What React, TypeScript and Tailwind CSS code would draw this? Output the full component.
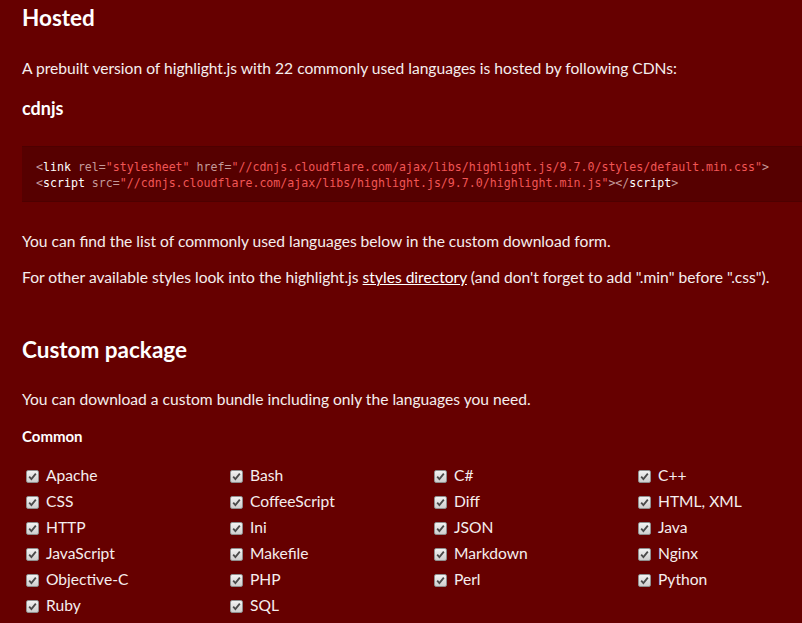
import React from 'react'

const LANGS = [
  'Apache', 'Bash', 'C#', 'C++',
  'CSS', 'CoffeeScript', 'Diff', 'HTML, XML',
  'HTTP', 'Ini', 'JSON', 'Java',
  'JavaScript', 'Makefile', 'Markdown', 'Nginx',
  'Objective-C', 'PHP', 'Perl', 'Python',
  'Ruby', 'SQL',
]

function Check() {
  return (
    <span className="inline-flex h-[13px] w-[13px] shrink-0 items-center justify-center rounded-[2px] border border-[#8f8f8f] bg-gradient-to-b from-[#f2f2f2] to-[#cfcfcf]">
      <svg width="9" height="9" viewBox="0 0 9 9">
        <path d="M1.2 4.6 L3.4 7 L7.8 1.6" fill="none" stroke="#4a4a4a" strokeWidth="1.8" />
      </svg>
    </span>
  )
}

export default function App() {
  return (
    <div className="min-h-[623px] w-full overflow-hidden bg-[#660000] pl-[22px] text-[#f5eeee]" style={{ fontFamily: 'Lato, "Noto Sans", sans-serif' }}>
      <h2 className="text-[22.5px] font-bold leading-[36px] text-white">Hosted</h2>
      <p className="mt-[20px] text-[15.6px] leading-[24px]">
        A prebuilt version of highlight.js with 22 commonly used languages is hosted by following CDNs:
      </p>
      <h3 className="mt-[16px] text-[18px] font-bold leading-[24px] text-white">cdnjs</h3>

      <pre
        className="mt-[26px] h-[56px] border-y border-[#4d0000] bg-[#560000] pl-[14px] pt-[12px] text-[11.6px] leading-[16px]"
        style={{ fontFamily: '"DejaVu Sans Mono", "Liberation Mono", monospace' }}
      >
        <span className="text-[#c49a9a]">&lt;</span>
        <span className="text-white">link</span>
        <span className="text-[#c49a9a]"> rel=</span>
        <span className="text-[#f25656]">"stylesheet"</span>
        <span className="text-[#c49a9a]"> href=</span>
        <span className="text-[#f25656]">"//cdnjs.cloudflare.com/ajax/libs/highlight.js/9.7.0/styles/default.min.css"</span>
        <span className="text-[#c49a9a]">&gt;</span>
        {'\n'}
        <span className="text-[#c49a9a]">&lt;</span>
        <span className="text-white">script</span>
        <span className="text-[#c49a9a]"> src=</span>
        <span className="text-[#f25656]">"//cdnjs.cloudflare.com/ajax/libs/highlight.js/9.7.0/highlight.min.js"</span>
        <span className="text-[#c49a9a]">&gt;&lt;/</span>
        <span className="text-white">script</span>
        <span className="text-[#c49a9a]">&gt;</span>
      </pre>

      <p className="mt-[27px] text-[15.6px] leading-[24px]">
        You can find the list of commonly used languages below in the custom download form.
      </p>
      <p className="mt-[12px] text-[15.6px] leading-[24px]">
        For other available styles look into the highlight.js <a className="underline text-white">styles directory</a> (and don't forget to add ".min" before ".css").
      </p>

      <h2 className="mt-[43px] text-[22.5px] font-bold leading-[36px] text-white">Custom package</h2>
      <p className="mt-[19px] text-[15.6px] leading-[24px]">
        You can download a custom bundle including only the languages you need.
      </p>
      <h4 className="mt-[13px] text-[15px] font-bold leading-[24px] text-white">Common</h4>

      <div className="mt-[15px] ml-[4px] grid grid-cols-[204px_204px_204px_204px]">
        {LANGS.map(l => (
          <label key={l} className="flex h-[26px] items-center gap-[7px] text-[15.6px]">
            <Check />
            <span>{l}</span>
          </label>
        ))}
      </div>
    </div>
  )
}
